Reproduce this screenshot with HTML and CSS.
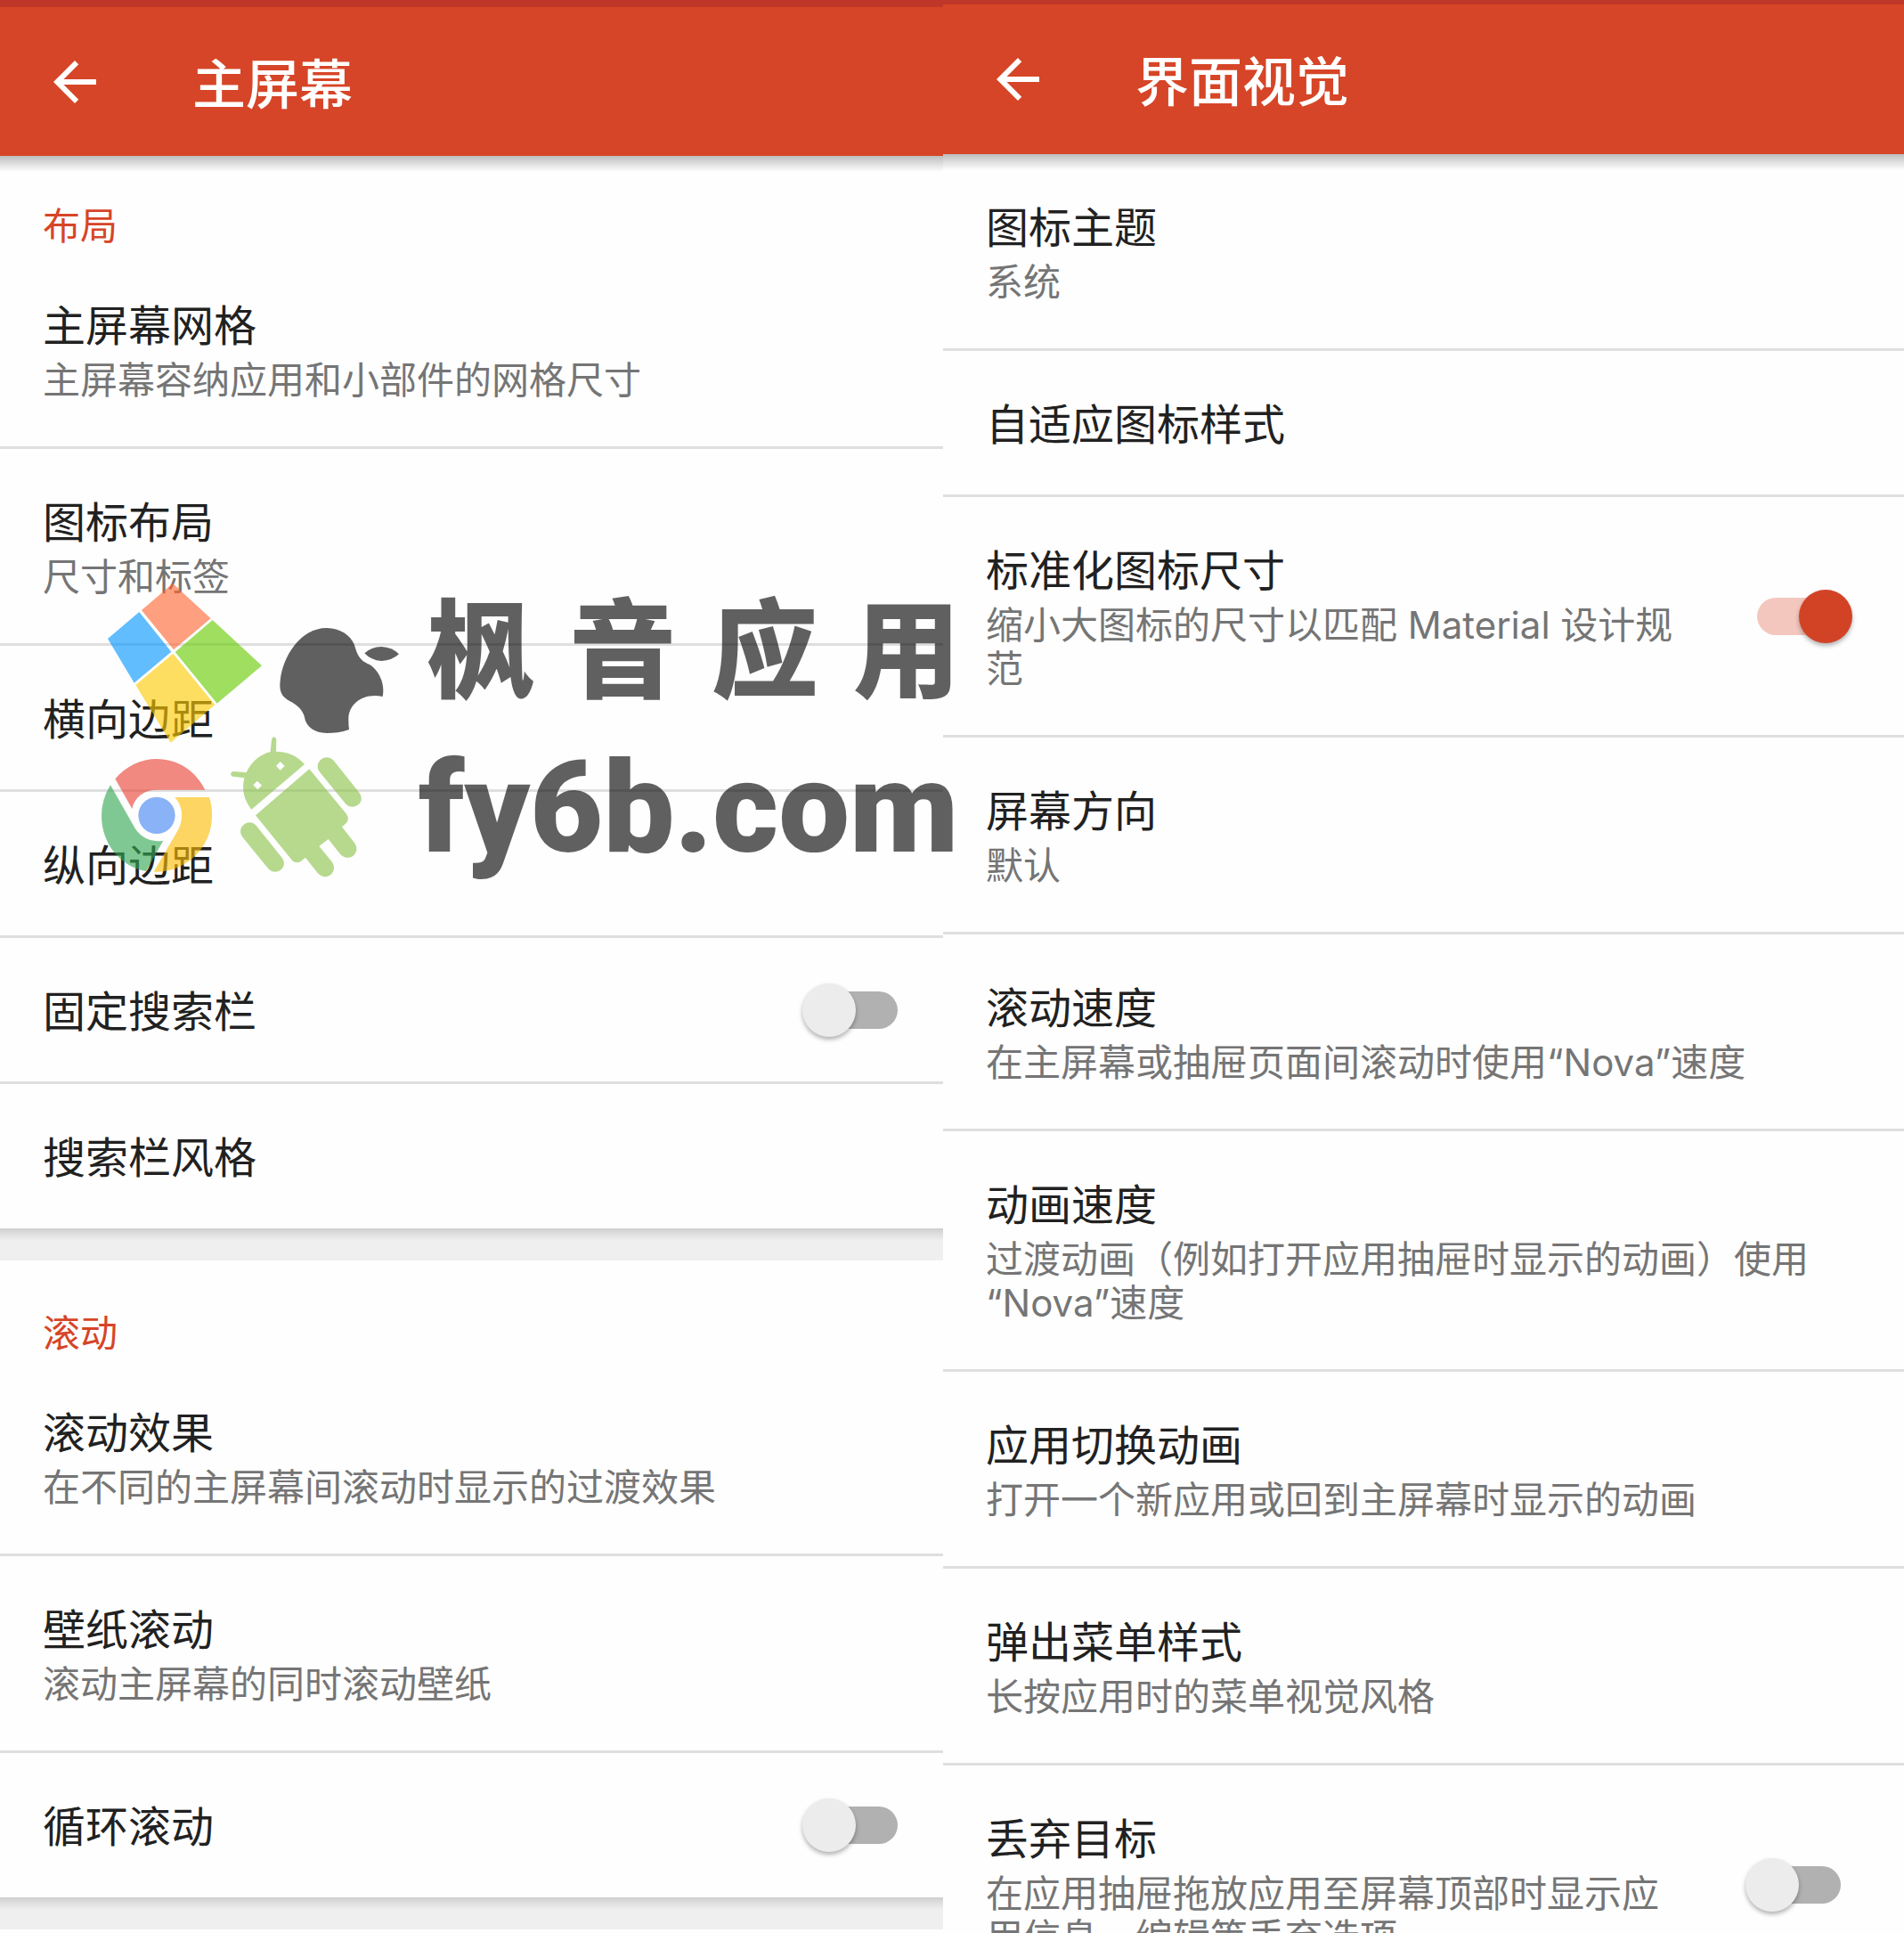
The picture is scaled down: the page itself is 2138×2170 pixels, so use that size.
FILE: index.html
```html
<!DOCTYPE html>
<html lang="zh-CN">
<head>
<meta charset="UTF-8">
<meta name="viewport" content="width=device-width, initial-scale=1.0">
<title>主屏幕</title>
<link rel="stylesheet" href="styles.css">
</head>
<body>
<div class="screens">
	<section class="screen home">
		<header class="appbar">
			<button class="back" type="button" aria-label="返回">
				<svg viewBox="0 0 24 24"><path d="M20 11H7.83l5.59-5.59L12 4l-8 8 8 8 1.41-1.41L7.83 13H20v-2z"/></svg>
			</button>
			<h1>主屏幕</h1>
		</header>
		<main>
			<div class="card">
				<h2>布局</h2>
				<a class="row" href="#"><span class="text"><b>主屏幕网格</b><small>主屏幕容纳应用和小部件的网格尺寸</small></span></a>
				<a class="row" href="#"><span class="text"><b>图标布局</b><small>尺寸和标签</small></span></a>
				<a class="row" href="#"><span class="text"><b>横向边距</b></span></a>
				<a class="row" href="#"><span class="text"><b>纵向边距</b></span></a>
				<label class="row"><span class="text"><b>固定搜索栏</b></span><input class="switch" type="checkbox"></label>
				<a class="row" href="#"><span class="text"><b>搜索栏风格</b></span></a>
			</div>
			<div class="card">
				<h2>滚动</h2>
				<a class="row" href="#"><span class="text"><b>滚动效果</b><small>在不同的主屏幕间滚动时显示的过渡效果</small></span></a>
				<a class="row" href="#"><span class="text"><b>壁纸滚动</b><small>滚动主屏幕的同时滚动壁纸</small></span></a>
				<label class="row"><span class="text"><b>循环滚动</b></span><input class="switch" type="checkbox"></label>
			</div>
			<div class="card"></div>
		</main>
	</section>

	<section class="screen look">
		<header class="appbar">
			<button class="back" type="button" aria-label="返回">
				<svg viewBox="0 0 24 24"><path d="M20 11H7.83l5.59-5.59L12 4l-8 8 8 8 1.41-1.41L7.83 13H20v-2z"/></svg>
			</button>
			<h1>界面视觉</h1>
		</header>
		<main>
			<div class="card">
				<a class="row" href="#"><span class="text"><b>图标主题</b><small>系统</small></span></a>
				<a class="row" href="#"><span class="text"><b>自适应图标样式</b></span></a>
				<label class="row"><span class="text"><b>标准化图标尺寸</b><small>缩小大图标的尺寸以匹配 Material 设计规范</small></span><input class="switch" type="checkbox" checked></label>
				<a class="row" href="#"><span class="text"><b>屏幕方向</b><small>默认</small></span></a>
				<a class="row" href="#"><span class="text"><b>滚动速度</b><small>在主屏幕或抽屉页面间滚动时使用“Nova”速度</small></span></a>
				<a class="row" href="#"><span class="text"><b>动画速度</b><small>过渡动画（例如打开应用抽屉时显示的动画）使用“Nova”速度</small></span></a>
				<a class="row" href="#"><span class="text"><b>应用切换动画</b><small>打开一个新应用或回到主屏幕时显示的动画</small></span></a>
				<a class="row" href="#"><span class="text"><b>弹出菜单样式</b><small>长按应用时的菜单视觉风格</small></span></a>
				<label class="row"><span class="text"><b>丢弃目标</b><small>在应用抽屉拖放应用至屏幕顶部时显示应用信息、编辑等丢弃选项</small></span><input class="switch" type="checkbox"></label>
			</div>
		</main>
	</section>
</div>

<div class="watermark">
	<svg class="logos" viewBox="0 0 1140 1080">
		<!-- windows -->
		<path fill="#ff6632" d="M282 45 410 163 285 268 177 135z"/>
		<path fill="#0296ff" d="M169 141 277 275 152 380 63 231z"/>
		<path fill="#67cb01" d="M416 168 582 322 431 449 290 276z"/>
		<path fill="#ffcb02" d="M283 281 424 454 275 581 157 387z"/>
		<!-- apple -->
		<path d="M802 195C845 196 880 218 893 250C902 275 905 303 945 318C975 337 998 380 989 426C925 412 872 450 874 505Q874 525 876 537C850 546 825 549 800 549C760 549 735 528 728 505C725 480 710 462 690 449C668 436 643 428 643 388C645 300 710 193 802 195z"/>
		<path d="M928 280Q950 259 985 258Q1020 259 1044 283Q1020 305 985 306Q950 304 928 280z"/>
		<!-- chrome -->
		<path fill="#ea4335" d="M88 703C125 660 175 636 228 636C300 636 360 677 391 740H228C185 740 153 764 145 804z"/>
		<path fill="#34a853" d="M72 724 150 861C168 896 206 919 250 911L192 1014C105 998 42 920 42 827Q42 773 72 724z"/>
		<path fill="#fbbc05" d="M289 765H405C412 785 414 805 414 827C414 935 325 1020 218 1016L301 873C320 835 315 793 289 765z"/>
		<circle fill="#4285f4" cx="228" cy="826" r="62"/>
		<!-- android -->
		<g fill="#8bc34a">
			<path fill-rule="evenodd" d="M547 806C521 774 514 737 523 700L484 695Q477 692 477 686Q479 678 487 678L530 682C545 647 576 620 611 612L615 570Q617 562 624 562Q631 564 631 572L630 611C668 611 701 625 726 654zM644 645 630 659 644 674 659 660zM567 710 553 724 568 739 582 725z"/>
			<path d="M742 670 867 821Q878 838 867 851L852 865 893 917C906 935 903 951 889 963C876 972 858 970 846 956L806 906 775 930 817 981C829 997 827 1013 815 1025C800 1037 782 1034 770 1020L729 968 713 981Q698 990 685 979L561 826z"/>
			<path d="M778 641C793 627 812 628 825 643L910 749C921 765 919 779 907 790C893 801 876 800 864 787L777 680C767 667 768 652 778 641z"/>
			<path d="M518 860C533 846 552 846 564 862L650 969C661 985 658 998 647 1009C633 1020 617 1019 604 1006L517 899C508 886 508 871 518 860z"/>
		</g>
	</svg>
	<div class="brand">
		<div class="name"><span>枫</span><span>音</span><span>应</span><span>用</span></div>
		<div class="site">fy6b.com</div>
	</div>
</div>
</body>
</html>
```
FILE: styles.css
```css
* {
	box-sizing: border-box;
}
body {
	background-color: #fefefe;
	color: #212121;
	font-family: Inter, "Noto Sans CJK SC", sans-serif;
	height: 100vh;
	margin: 0;
	overflow: hidden;
	position: relative;
}
.screens {
	display: grid;
	grid-template-columns: 1059fr 1079fr;
	height: 100%;
}
.screen {
	--end: 58px;
	background-color: #fefefe;
	min-width: 0;
	overflow: hidden;
}
.home {
	--end: 38px;
}

/* app bar */
.appbar {
	align-items: center;
	background-color: #d64527;
	border-top: 5px solid #bf3728;
	display: flex;
	gap: 96px;
	height: 173px;
	padding-left: 48px;
	position: relative;
}
.home .appbar {
	border-top-width: 8px;
	height: 175px;
}
.appbar::after {
	background: linear-gradient(rgba(0,0,0,0.26), rgba(0,0,0,0.12) 50%, rgba(0,0,0,0));
	content: '';
	height: 18px;
	left: 0;
	position: absolute;
	top: 100%;
	width: 100%;
}
.back {
	background: none;
	border: none;
	height: 72px;
	padding: 0;
	width: 72px;
}
.back svg {
	display: block;
	fill: #fff;
}
h1 {
	color: #fff;
	font-size: 60px;
	font-weight: 500;
	line-height: 80px;
	margin: 0;
	padding-top: 6px;
}

/* cards and rows */
.card + .card {
	border-top: 36px solid #efefef;
	min-height: 60px;
	padding-top: 3px;
	position: relative;
}
.card + .card::before {
	background: linear-gradient(#cecece, #dcdcdc 35%, #efefef);
	content: '';
	height: 14px;
	left: 0;
	position: absolute;
	top: -36px;
	width: 100%;
}
h2 {
	color: #d64527;
	font-size: 42px;
	font-weight: 400;
	line-height: 56px;
	margin: 0;
	padding: 51px 48px 1px;
}
.row {
	align-items: center;
	border-bottom: 3px solid #dfdfdf;
	color: inherit;
	display: flex;
	gap: 68px;
	padding: 51px var(--end) 46px 48px;
	text-decoration: none;
}
.row:last-child {
	border-bottom: 1px solid #fefefe;
}
.text {
	flex: 1;
}
b {
	display: block;
	font-size: 48px;
	font-weight: 400;
	line-height: 64px;
}
small {
	color: #757575;
	display: block;
	font-size: 42px;
	line-height: 49px;
	margin-top: 4px;
	padding-bottom: 4px;
}

/* switch */
.switch {
	appearance: none;
	flex: none;
	height: 60px;
	margin: 0 0 4px;
	position: relative;
	width: 120px;
}
.switch::before {
	background-color: #b1b1b1;
	border-radius: 21px;
	content: '';
	height: 42px;
	left: 13px;
	position: absolute;
	top: 9px;
	width: 94px;
}
.switch::after {
	background-color: #ececec;
	border-radius: 50%;
	box-shadow: 0 3px 5px rgba(0,0,0,0.3);
	content: '';
	height: 60px;
	left: 0;
	position: absolute;
	top: 0;
	width: 60px;
}
.switch:checked::before {
	background-color: #f4c7be;
}
.switch:checked::after {
	background-color: #d24326;
	left: 60px;
}

/* watermark over both screens */
.watermark {
	align-items: flex-start;
	display: flex;
	left: 100px;
	opacity: 0.62;
	pointer-events: none;
	position: absolute;
	top: 640px;
}
.logos {
	height: 360px;
	width: 380px;
}
.brand {
	color: #000;
	font-weight: 900;
	margin-left: -10px;
	width: 608px;
}
.name {
	display: flex;
	font-family: "Noto Sans CJK SC", sans-serif;
	font-size: 120px;
	justify-content: space-between;
	line-height: 164px;
	padding-left: 10px;
}
.site {
	font-family: Roboto, sans-serif;
	font-size: 142px;
	line-height: 208px;
}
```
